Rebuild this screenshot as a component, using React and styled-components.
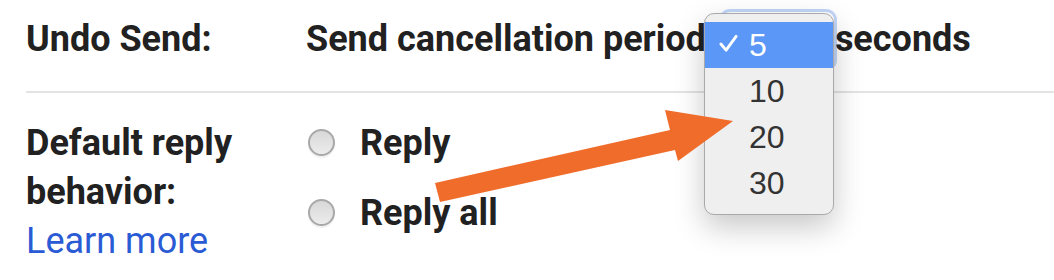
import styled, { createGlobalStyle } from "styled-components";

const GlobalStyle = createGlobalStyle`
  html, body {
    margin: 0;
    padding: 0;
    background: #fff;
  }
  body {
    font-family: Roboto, "Noto Sans", Arial, sans-serif;
    color: #212121;
  }
`;

const OPTIONS = ["5", "10", "20", "30"];

const App = () => {
  return (
    <>
      <GlobalStyle />
      <Page>
        <SettingRow $divider>
          <Label>Undo Send:</Label>
          <Value>
            Send cancellation period
            <SelectWrap>
              <SelectBox />
              <Menu>
                {OPTIONS.map((opt, i) => (
                  <MenuItem key={opt} $selected={i === 0}>
                    {i === 0 && (
                      <Check viewBox="0 0 20 20">
                        <path d="M2 10.5 L7.5 17 L18 2.5" />
                      </Check>
                    )}
                    {opt}
                  </MenuItem>
                ))}
              </Menu>
            </SelectWrap>
            seconds
          </Value>
        </SettingRow>

        <SettingRow>
          <Label>
            Default reply behavior:
            <LearnMore href="#">Learn more</LearnMore>
          </Label>
          <Options>
            <Option>
              <Radio />
              <span>Reply</span>
            </Option>
            <Option>
              <Radio />
              <span>Reply all</span>
            </Option>
          </Options>
        </SettingRow>

        <Arrow viewBox="0 0 1054 280">
          <polygon points="435,183 670,130 665,110 733,121 678,161 675,150 440,202" />
        </Arrow>
      </Page>
    </>
  );
};

export default App;

const Page = styled.div`
  position: relative;
  width: 1054px;
  height: 280px;
  overflow: hidden;
  padding-left: 26px;
  box-sizing: border-box;
`;

const SettingRow = styled.div`
  display: grid;
  grid-template-columns: 280px 1fr;
  padding-top: ${({ $divider }) => ($divider ? "15px" : "26px")};
  padding-bottom: ${({ $divider }) => ($divider ? "27px" : "0")};
  border-bottom: ${({ $divider }) => ($divider ? "2px solid #e3e3e3" : "none")};
  font-size: 36px;
  line-height: 49px;
`;

const Label = styled.div`
  font-weight: 700;
  padding-right: 50px;
`;

const Value = styled.div`
  font-weight: 700;
  white-space: nowrap;
`;

const SelectWrap = styled.span`
  position: relative;
  display: inline-block;
  width: 129px;
  height: 49px;
  vertical-align: top;
`;

const SelectBox = styled.span`
  position: absolute;
  left: 16px;
  top: -3px;
  width: 112px;
  height: 56px;
  border-radius: 8px;
  background: #fff;
  box-shadow: 0 0 0 3px rgba(120, 165, 240, 0.45);
`;

const Menu = styled.div`
  position: absolute;
  left: -2px;
  top: -2px;
  width: 130px;
  box-sizing: border-box;
  padding: 8px 0;
  background: #efefef;
  border: 1px solid #a9a9a9;
  border-radius: 10px;
  box-shadow: 0 12px 30px rgba(0, 0, 0, 0.22);
  font-family: "Liberation Sans", Arial, sans-serif;
  font-weight: 400;
  font-size: 32px;
  line-height: 46px;
  color: #333;
`;

const MenuItem = styled.div`
  position: relative;
  height: 46px;
  padding-left: 44px;
  background: ${({ $selected }) => ($selected ? "#5b97f6" : "transparent")};
  color: ${({ $selected }) => ($selected ? "#fff" : "#333")};
`;

const Check = styled.svg`
  position: absolute;
  left: 14px;
  top: 12px;
  width: 19px;
  height: 19px;
  fill: none;
  stroke: #fff;
  stroke-width: 3;
  stroke-linecap: round;
  stroke-linejoin: round;
`;

const LearnMore = styled.a`
  display: block;
  font-weight: 400;
  color: #2a5bd5;
  text-decoration: none;
`;

const Options = styled.div`
  display: flex;
  flex-direction: column;
  gap: 21px;
  font-weight: 700;
`;

const Option = styled.label`
  display: flex;
  align-items: center;
  gap: 25px;
  padding-left: 2px;
`;

const Radio = styled.span`
  width: 27px;
  height: 27px;
  box-sizing: border-box;
  border-radius: 50%;
  border: 2px solid #a8a8a8;
  background: linear-gradient(180deg, #d8d8d8 0%, #ececec 100%);
  box-shadow: 0 2px 1px rgba(0, 0, 0, 0.06);
  margin-top: -3px;
`;

const Arrow = styled.svg`
  position: absolute;
  left: 0;
  top: 0;
  width: 1054px;
  height: 280px;
  pointer-events: none;

  polygon {
    fill: #f06c2b;
  }
`;
